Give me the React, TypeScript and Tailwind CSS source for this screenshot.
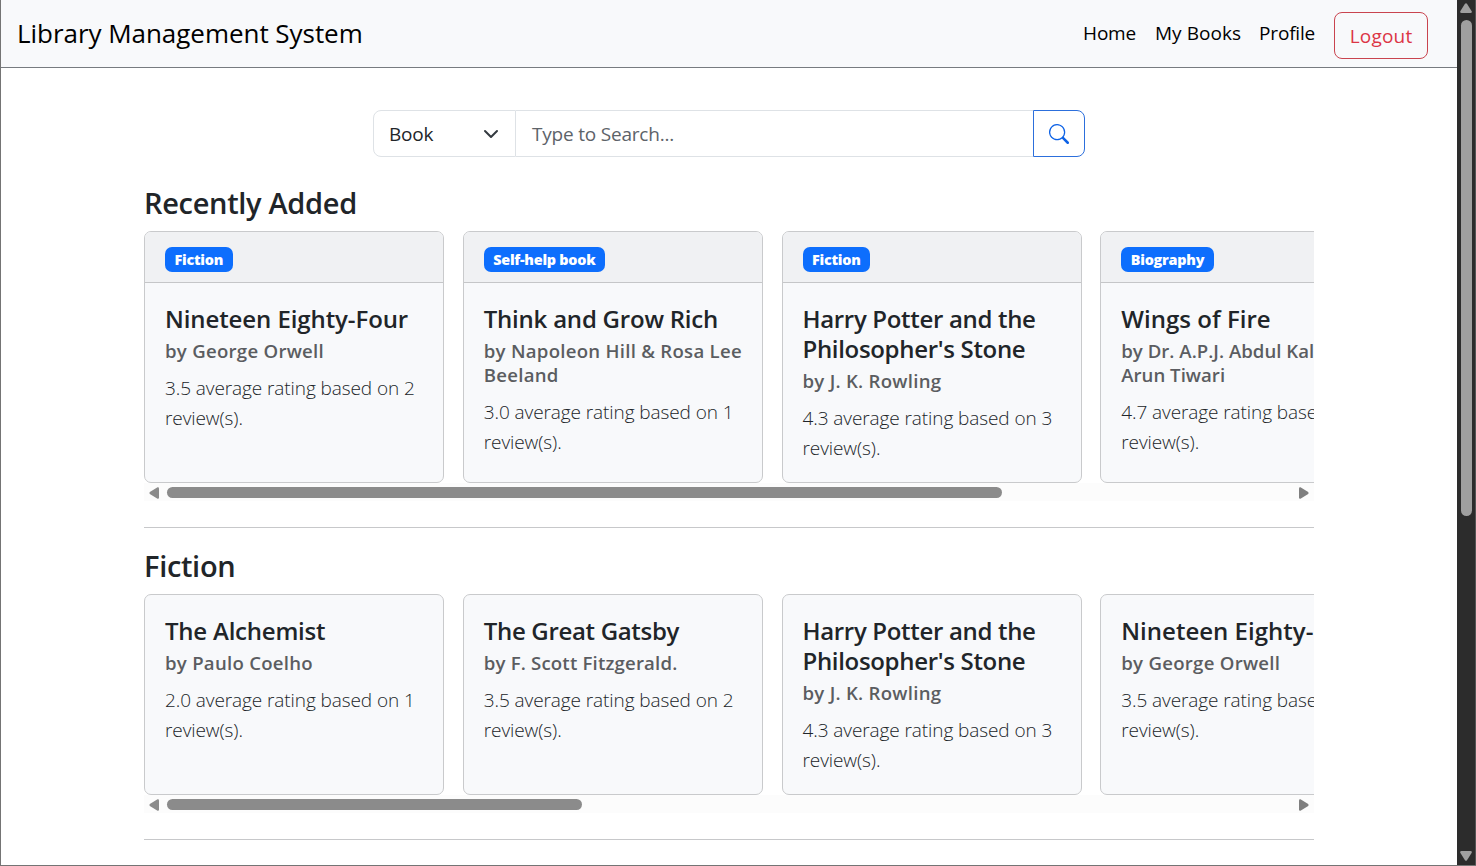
import React from "react";

type Book = {
  title: string;
  author: string;
  rating: string;
  reviews: number;
  genre?: string;
  tracking?: string;
  authorTracking?: string;
};

const recent: Book[] = [
  { genre: "Fiction", title: "Nineteen Eighty-Four", author: "George Orwell", rating: "3.5", reviews: 2, tracking: "tracking-[-0.09px]" },
  { genre: "Self-help book", title: "Think and Grow Rich", author: "Napoleon Hill & Rosa Lee Beeland", rating: "3.0", reviews: 1 },
  { genre: "Fiction", title: "Harry Potter and the Philosopher's Stone", author: "J. K. Rowling", rating: "4.3", reviews: 3, tracking: "tracking-[-0.32px]" },
  {
    genre: "Biography",
    title: "Wings of Fire",
    author: "Dr. A.P.J. Abdul Kalam & Arun Tiwari",
    rating: "4.7",
    reviews: 3,
    tracking: "tracking-[0.03px]",
    authorTracking: "tracking-[0.02px]",
  },
];

const fiction: Book[] = [
  { title: "The Alchemist", author: "Paulo Coelho", rating: "2.0", reviews: 1 },
  { title: "The Great Gatsby", author: "F. Scott Fitzgerald.", rating: "3.5", reviews: 2, tracking: "tracking-[-0.32px]", authorTracking: "tracking-[0.18px]" },
  { title: "Harry Potter and the Philosopher's Stone", author: "J. K. Rowling", rating: "4.3", reviews: 3, tracking: "tracking-[-0.32px]" },
  { title: "Nineteen Eighty-Four", author: "George Orwell", rating: "3.5", reviews: 2, tracking: "tracking-[0.02px]" },
];

function BookCard({ book }: { book: Book }) {
  return (
    <article className="flex w-[300px] shrink-0 flex-col overflow-hidden rounded-[7px] border border-[#c9cacc] bg-[#f8f9fb]">
      {book.genre && (
        <div className="flex h-[51px] shrink-0 items-start border-b border-[#c5c6c8] bg-[#f0f1f3] px-5 pt-[15px]">
          <span className="flex h-[25px] items-center rounded-[7px] bg-[#0d6efd] px-[9.5px] text-[14.4px] font-extrabold tracking-[-0.25px] text-white">
            {book.genre}
          </span>
        </div>
      )}
      <div className="px-5 pt-[21px] pb-[19px]">
        <h3 className={`text-[24px] leading-[30px] font-semibold text-[#212529] ${book.tracking ?? "tracking-[-0.22px]"}`}>
          {book.title}
        </h3>
        <h4 className={`mt-[5px] -mr-2 text-[18.6px] leading-6 font-semibold text-[#5b5d61] ${book.authorTracking ?? "tracking-[0.27px]"}`}>
          by {book.author}
        </h4>
        <p className="mt-[10px] -mr-2 text-[19px] leading-[30px] font-light tracking-[-0.09px] text-[#212529]">
          {book.rating} average rating based on {book.reviews} review(s).
        </p>
      </div>
    </article>
  );
}

function Shelf({ name, books, thumb }: { name: string; books: Book[]; thumb: string }) {
  return (
    <section>
      <h2 className="text-[29px] leading-9 font-semibold tracking-[-0.32px] text-[#212529]">{name}</h2>
      <div className="mt-[10px] flex gap-[18.75px] overflow-hidden">
        {books.map((b) => (
          <BookCard key={b.title} book={b} />
        ))}
      </div>
      <div className="flex h-[18px] items-center bg-[#fcfcfc] px-[5px] pt-px">
        <svg width="10" height="12" viewBox="0 0 10 12" fill="#8b8b8b">
          <path d="M8.5 0.3Q10 0 10 1.5V10.5Q10 12 8.5 11.7L0.8 7Q0 6 0.8 5Z" />
        </svg>
        <div className="ml-2 flex-1">
          <div className={`h-[11px] rounded-full bg-[#8b8b8b] ${thumb}`} />
        </div>
        <svg width="10" height="12" viewBox="0 0 10 12" fill="#7f7f7f">
          <path d="M1.5 0.3Q0 0 0 1.5V10.5Q0 12 1.5 11.7L9.2 7Q10 6 9.2 5Z" />
        </svg>
      </div>
      <hr className="mt-[26px] mb-5 border-t border-[#c7c8ca]" />
    </section>
  );
}

export default function App() {
  return (
    <div className="flex h-[866px] w-[1476px] overflow-hidden border-b border-l border-[#747474] bg-white font-['Open_Sans','Noto_Sans',sans-serif]">
      <div className="w-[1456px] shrink-0">
        <header className="flex h-[68px] items-start justify-between border-b border-[#777b80] bg-[#f8f9fb] pr-[29px] pl-4">
          <div className="mt-[14px] text-[26px] leading-[38px] tracking-[-0.04px] text-black">Library Management System</div>
          <nav className="flex items-start text-[19px] leading-[30px] tracking-[-0.2px] text-black">
            <a className="mt-[18px] mr-[19px]">Home</a>
            <a className="mt-[18px] mr-[18px] tracking-[0.05px]">My Books</a>
            <a className="mt-[18px] mr-[19px]">Profile</a>
            <button className="mt-3 flex h-[47px] w-[94px] items-center justify-center rounded-[8px] border border-[#c9444f] tracking-[0.2px] text-[#dc3545]">
              Logout
            </button>
          </nav>
        </header>
        <main className="ml-[143px] w-[1170px] pt-[42px]">
          <div className="mb-7 ml-[229px] flex h-[47px] w-[712px] text-[19px] tracking-[-0.2px]">
            <div className="flex w-[143px] items-center justify-between rounded-l-[8px] border border-[#dee2e6] pr-4 pl-[15px] text-[#212529]">
              <span className="pt-px">Book</span>
              <svg width="16" height="16" viewBox="0 0 16 16" fill="none" stroke="#343a40" strokeWidth="2" strokeLinecap="round" strokeLinejoin="round">
                <path d="m2 5 6 6 6-6" />
              </svg>
            </div>
            <div className="flex flex-1 items-center border-y border-[#dee2e6] pt-px pl-4 text-[#5d6369]">Type to Search...</div>
            <button className="flex w-[52px] items-center justify-center rounded-r-[8px] border border-[#2c6fdc]">
              <svg width="20" height="20" viewBox="0 0 16 16" fill="#0d62e6">
                <path d="M11.742 10.344a6.5 6.5 0 1 0-1.397 1.398h-.001q.044.06.098.115l3.85 3.85a1 1 0 0 0 1.415-1.414l-3.85-3.85a1 1 0 0 0-.115-.1zM12 6.5a5.5 5.5 0 1 1-11 0 5.5 5.5 0 0 1 11 0" />
              </svg>
            </button>
          </div>
          <Shelf name="Recently Added" books={recent} thumb="w-[835px]" />
          <Shelf name="Fiction" books={fiction} thumb="w-[415px]" />
        </main>
      </div>
      <div className="flex w-[18px] shrink-0 flex-col items-center bg-[#2c2c2c]">
        <svg className="mt-[3px] shrink-0" width="12" height="10" viewBox="0 0 12 10" fill="#a0a0a0">
          <path d="M0.3 8.3Q-0.2 10 1.5 10H10.5Q12.2 10 11.7 8.3L7 0.8Q6 -0.2 5 0.8Z" />
        </svg>
        <div className="mt-[7px] h-[496px] w-[11px] shrink-0 rounded-full bg-[#9f9f9f]" />
        <svg className="mt-auto mb-1 shrink-0" width="12" height="10" viewBox="0 0 12 10" fill="#a0a0a0">
          <path d="M0.3 1.7Q-0.2 0 1.5 0H10.5Q12.2 0 11.7 1.7L7 9.2Q6 10.2 5 9.2Z" />
        </svg>
      </div>
      <div className="flex-1 bg-[#555555]" />
    </div>
  );
}
